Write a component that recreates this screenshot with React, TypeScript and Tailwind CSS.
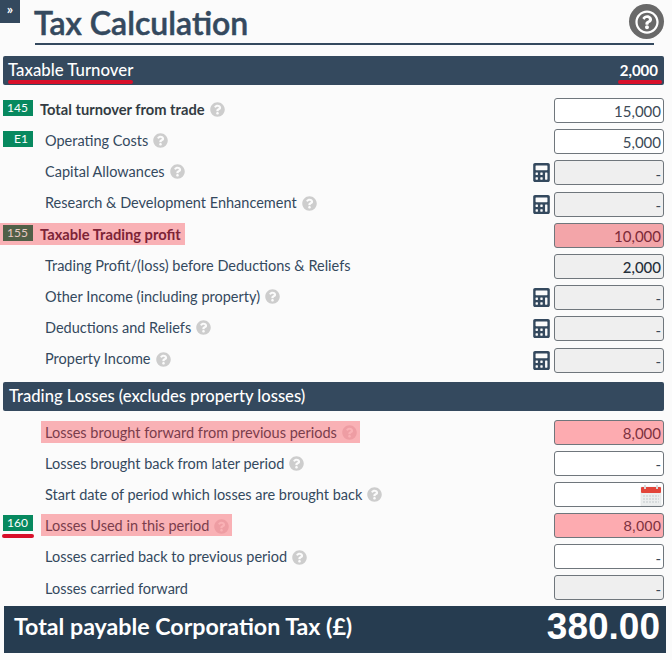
import { FaCalculator, FaQuestionCircle, FaRegQuestionCircle } from "react-icons/fa";

type Row = {
  label: string;
  badge?: string;
  value?: string;
  help?: boolean;
  calc?: boolean;
  field?: "white" | "grey" | "pink" | "rose";
  bold?: boolean;
  mark?: "row" | "label";
  dark?: boolean;
  underline?: boolean;
  date?: boolean;
  arial?: boolean;
};

const turnoverRows: Row[] = [
  { label: "Total turnover from trade", badge: "145", value: "15,000", help: true, field: "white", bold: true },
  { label: "Operating Costs", badge: "E1", value: "5,000", help: true, field: "white" },
  { label: "Capital Allowances", value: "-", help: true, calc: true, field: "grey" },
  { label: "Research & Development Enhancement", value: "-", help: true, calc: true, field: "grey" },
  { label: "Taxable Trading profit", badge: "155", value: "10,000", field: "rose", bold: true, mark: "row" },
  { label: "Trading Profit/(loss) before Deductions & Reliefs", value: "2,000", field: "grey", dark: true },
  { label: "Other Income (including property)", value: "-", help: true, calc: true, field: "grey" },
  { label: "Deductions and Reliefs", value: "-", help: true, calc: true, field: "grey" },
  { label: "Property Income", value: "-", help: true, calc: true, field: "grey" },
];

const lossRows: Row[] = [
  { label: "Losses brought forward from previous periods", value: "8,000", help: true, field: "pink", mark: "label" },
  { label: "Losses brought back from later period", value: "-", help: true, field: "white" },
  { label: "Start date of period which losses are brought back", help: true, field: "white", date: true },
  { label: "Losses Used in this period", badge: "160", value: "8,000", help: true, field: "pink", mark: "label", underline: true, arial: true },
  { label: "Losses carried back to previous period", value: "-", help: true, field: "white" },
  { label: "Losses carried forward", value: "-", field: "grey" },
];

const fieldStyles = {
  white: "bg-white text-[#3c4a56]",
  grey: "bg-[#efefef] text-[#3c4a56]",
  pink: "bg-[#fdabb0] text-[#7d3240]",
  rose: "bg-[#f3a5a9] text-[#7d2a38]",
};

const CalendarIcon = () => (
  <svg width="22" height="22" viewBox="0 0 22 22" className="absolute right-px top-[1px]">
    <rect x="1" y="3" width="20" height="19" fill="#eceeee" stroke="#dcdfe0" strokeWidth="0.5" />
    <rect x="1" y="3" width="20" height="6" rx="1" fill="#e2453a" />
    <rect x="4" y="1" width="2" height="4" fill="#d8d8d8" />
    <rect x="16" y="1" width="2" height="4" fill="#d8d8d8" />
    <g stroke="#c3c9cc" strokeWidth="1" strokeDasharray="2 1">
      <path d="M3 12h16M3 15h16M3 18h16" />
    </g>
  </svg>
);

const FormRow = ({ row, lower }: { row: Row; lower?: boolean }) => {
  const badgeColor = row.mark === "row" ? "bg-[#505f47] text-[#e9c9c4]" : "bg-[#07895f] text-white";
  const labelColor = row.mark === "row" ? "text-[#7d2437]" : row.mark ? "text-[#7a3d4c]" : row.bold ? "text-[#333b42]" : "text-[#34495e]";
  const helpColor = row.mark ? "text-[#ee9da3]" : "text-[#cdcdcd]";
  const badgeGap = lower ? "mb-[4px]" : row.mark === "row" ? "mb-px" : "mb-[3px]";

  const badge = (
    <span
      className={`flex h-4 w-[30px] shrink-0 items-center justify-end pr-[5px] text-[12px] leading-none ${row.badge ? badgeColor : ""} ${badgeGap}`}
    >
      {row.badge}
    </span>
  );

  return (
    <div className="relative flex h-[25px] items-start">
      {row.mark === "row" ? (
        <div className="-ml-[3px] flex h-[22px] items-center bg-[#f9b1b5] pl-[3px] pr-[4px]">
          {badge}
          <span className={`ml-[7px] text-[14.7px] font-bold ${labelColor}`}>{row.label}</span>
        </div>
      ) : (
        <div className={`flex items-center ${lower ? "mt-px" : ""}`}>
          {badge}
          <div
            className={`flex items-center ${lower ? "h-[22px] pt-[2px]" : "h-[23px]"} ${row.bold ? "ml-[7px]" : "ml-[8px] pl-[4px]"} ${row.mark === "label" ? "bg-[#f9b1b5] pr-[3px]" : ""}`}
          >
            <span className={`${row.bold ? "text-[14.7px] font-bold" : "text-[14.5px]"} ${labelColor}`}>{row.label}</span>
            {row.help && <FaQuestionCircle className={`ml-[5px] ${helpColor}`} size={15} />}
          </div>
        </div>
      )}
      {row.underline && <div className="absolute -left-px top-[21px] h-[4px] w-[32px] rounded-full bg-[#d9102a]" />}
      <div className="ml-auto flex items-center">
        {row.calc && <FaCalculator className="mr-[3px] text-[#34495e]" size={19} />}
        <div
          className={`relative flex h-[25px] w-[110px] items-center justify-end rounded-[3px] border border-[#6f767c] pr-[2px] pt-[2px] text-[15px] ${fieldStyles[row.field ?? "white"]} ${row.dark ? "font-medium text-[#26303a]" : ""} ${row.arial ? "font-['Liberation_Sans',sans-serif] text-[14px]" : ""}`}
        >
          {row.value}
          {row.date && <CalendarIcon />}
        </div>
      </div>
    </div>
  );
};

const App = () => {
  return (
    <div className="relative h-[660px] w-[672px] overflow-hidden bg-[#fbfbfb] pr-[8px] pl-[3px] font-['Lato',sans-serif]">
      <div className="absolute left-0 top-0 flex h-[23px] w-[20px] items-start justify-center bg-[#34495e] text-[14px] font-bold leading-[18px] text-white">
        »
      </div>

      <div className="relative ml-[32px] mr-[10px] flex h-[45px] items-end border-b-2 border-[#34495e]">
        <h1 className="-ml-px text-[32px] font-semibold leading-[40px] text-[#34495e] [-webkit-text-stroke:0.5px_#34495e]">Tax Calculation</h1>
      </div>
      <div className="absolute left-[629px] top-[4px] flex h-[35px] w-[35px] items-center justify-center rounded-full bg-[#696969]">
        <FaRegQuestionCircle className="text-white" size={24} />
      </div>

      <div className="relative mt-[11px] flex h-[29px] items-center justify-between rounded-[2px] bg-[#34495e] pl-[5px] pr-[6px] text-white">
        <span className="text-[16.8px] font-medium leading-none">Taxable Turnover</span>
        <span className="text-[15px] font-bold leading-none">2,000</span>
        <div className="absolute bottom-px left-[5px] h-[4px] w-[125px] rounded-full bg-[#d9102a]" />
        <div className="absolute bottom-px right-[2px] h-[4px] w-[44px] rounded-full bg-[#d9102a]" />
      </div>

      <div className="mt-[13px] flex flex-col gap-[6.2px]">
        {turnoverRows.map((row) => (
          <FormRow key={row.label} row={row} />
        ))}
      </div>

      <div className="mt-[9px] flex h-[29px] items-center rounded-[2px] bg-[#34495e] pl-[6px] text-[16.6px] font-medium leading-none text-white">
        Trading Losses (excludes property losses)
      </div>

      <div className="mt-[9px] flex flex-col gap-[6.2px]">
        {lossRows.map((row) => (
          <FormRow key={row.label} row={row} lower />
        ))}
      </div>

      <div className="ml-px -mr-[2px] mt-[6px] flex h-[47px] items-center justify-between bg-[#263c50] pb-[6px] pl-[10px] pr-[6px] text-white">
        <span className="text-[23.2px] font-bold leading-none">Total payable Corporation Tax (£)</span>
        <span className="font-['Liberation_Sans',sans-serif] text-[37px] font-bold leading-none">380.00</span>
      </div>
    </div>
  );
};

export default App;
